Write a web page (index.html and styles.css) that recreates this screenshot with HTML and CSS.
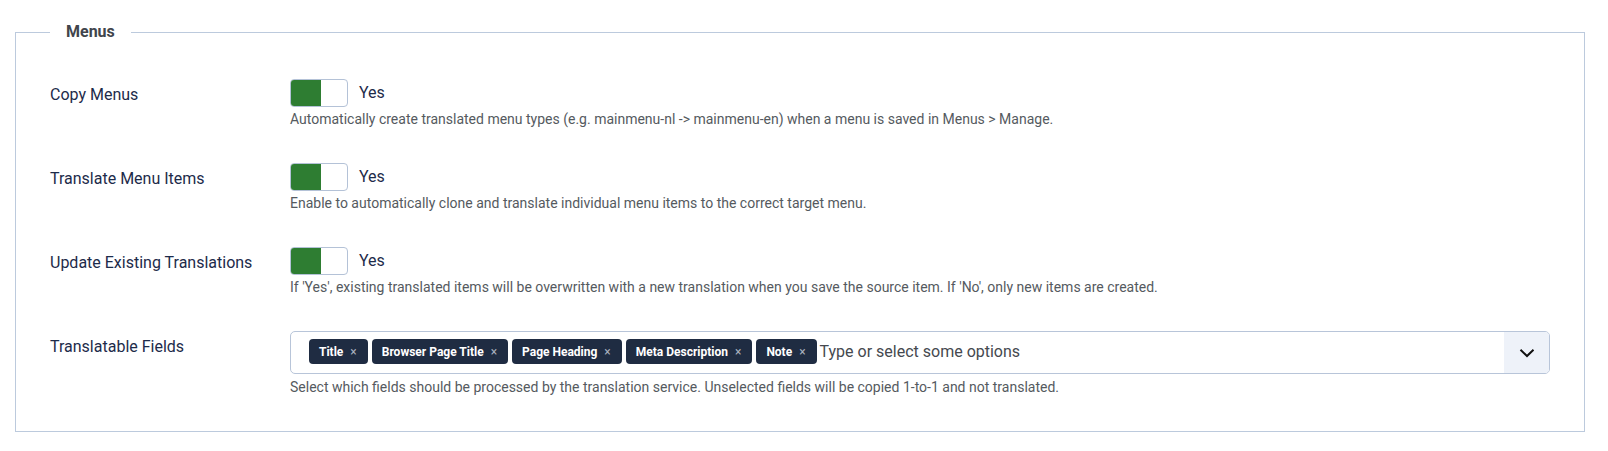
FILE: index.html
```html
<!DOCTYPE html>
<html lang="en">
<head>
<meta charset="utf-8">
<title>Menus</title>
<link rel="stylesheet" href="styles.css">
</head>
<body>
<div class="page">
  <fieldset class="options">
    <legend class="legend">Menus</legend>

    <div class="group">
      <div class="label">Copy Menus</div>
      <div class="control">
        <div class="switch-row">
          <span class="switch"><span class="switch-on"></span></span>
          <span class="state">Yes</span>
        </div>
        <div class="desc">Automatically create translated menu types (e.g. mainmenu-nl -&gt; mainmenu-en) when a menu is saved in Menus &gt; Manage.</div>
      </div>
    </div>

    <div class="group">
      <div class="label">Translate Menu Items</div>
      <div class="control">
        <div class="switch-row">
          <span class="switch"><span class="switch-on"></span></span>
          <span class="state">Yes</span>
        </div>
        <div class="desc">Enable to automatically clone and translate individual menu items to the correct target menu.</div>
      </div>
    </div>

    <div class="group">
      <div class="label">Update Existing Translations</div>
      <div class="control">
        <div class="switch-row">
          <span class="switch"><span class="switch-on"></span></span>
          <span class="state">Yes</span>
        </div>
        <div class="desc">If 'Yes', existing translated items will be overwritten with a new translation when you save the source item. If 'No', only new items are created.</div>
      </div>
    </div>

    <div class="group">
      <div class="label">Translatable Fields</div>
      <div class="control">
        <div class="select">
          <div class="tags">
            <span class="tag">Title<span class="tag-x">&#215;</span></span>
            <span class="tag">Browser Page Title<span class="tag-x">&#215;</span></span>
            <span class="tag">Page Heading<span class="tag-x">&#215;</span></span>
            <span class="tag">Meta Description<span class="tag-x">&#215;</span></span>
            <span class="tag">Note<span class="tag-x">&#215;</span></span>
            <span class="placeholder">Type or select some options</span>
          </div>
          <div class="select-btn">
            <svg width="16" height="10" viewBox="0 0 16 10" aria-hidden="true">
              <path d="M1.5 1.8 L8 8 L14.5 1.8" fill="none" stroke="#111" stroke-width="2"/>
            </svg>
          </div>
        </div>
        <div class="desc desc-select">Select which fields should be processed by the translation service. Unselected fields will be copied 1-to-1 and not translated.</div>
      </div>
    </div>
  </fieldset>
</div>
</body>
</html>
```

FILE: styles.css
```css
html, body {
  margin: 0;
  padding: 0;
  background: #ffffff;
}

body {
  font-family: Roboto, "Liberation Sans", Arial, sans-serif;
  color: #1d2b4a;
}

.page {
  padding: 20px 23px 18px 15px;
}

.options {
  margin: 0;
  min-width: 0;
  border: 1px solid #bccadd;
  padding: 35px 34px 33px 34px;
}

.legend {
  padding: 0 16px;
  margin: 0;
  font-size: 16px;
  line-height: 24px;
  font-weight: 700;
  color: #41454c;
}

.group {
  display: grid;
  grid-template-columns: 240px 1fr;
  margin-bottom: 33px;
}

.group:last-child {
  margin-bottom: 0;
}

.label {
  padding-top: 4px;
  font-size: 16px;
  line-height: 24px;
  color: #1d2b4a;
}

.control {
  min-width: 0;
}

.switch-row {
  display: flex;
  align-items: center;
  height: 28px;
}

.switch {
  display: flex;
  width: 58px;
  height: 28px;
  box-sizing: border-box;
  border: 1px solid #b4c2d7;
  border-radius: 4px;
  background: #ffffff;
  overflow: hidden;
}

.switch-on {
  width: 30px;
  height: 100%;
  background: #2e7d32;
}

.state {
  margin-left: 11px;
  font-size: 16px;
  line-height: 24px;
  color: #1d2b4a;
}

.desc {
  margin-top: 2px;
  font-size: 14px;
  line-height: 21px;
  color: #555a60;
}

.desc-select {
  margin-top: 3px;
}

.select {
  display: flex;
  height: 43px;
  box-sizing: border-box;
  border: 1px solid #b8c5d9;
  border-radius: 5px;
  overflow: hidden;
}

.tags {
  flex: 1;
  display: flex;
  align-items: flex-start;
  gap: 4px;
  padding: 7px 0 0 18px;
}

.tag {
  display: inline-flex;
  align-items: center;
  height: 25px;
  padding: 0 11px 0 10px;
  border-radius: 4px;
  background: #1f2c42;
  color: #ffffff;
  font-size: 12px;
  font-weight: 700;
  white-space: nowrap;
}

.tag-x {
  margin-left: 7px;
  font-size: 12px;
  font-weight: 400;
  color: #a9b1be;
}

.placeholder {
  margin-left: -1px;
  font-size: 16px;
  line-height: 25px;
  color: #45494f;
  white-space: nowrap;
}

.select-btn {
  width: 45px;
  display: flex;
  align-items: center;
  justify-content: center;
  background: #eef2f9;
}
```
